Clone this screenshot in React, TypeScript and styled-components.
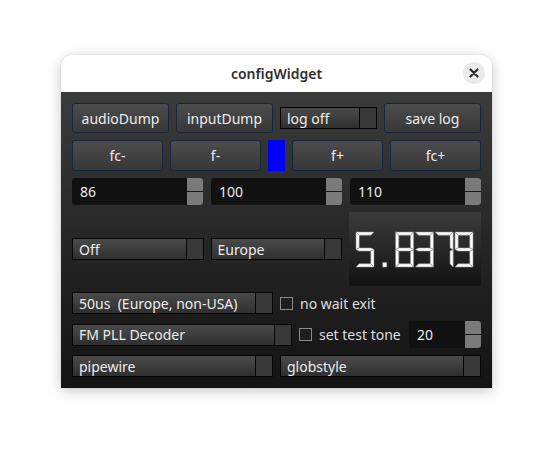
import React from 'react';
import styled, { createGlobalStyle } from 'styled-components';

const GlobalStyle = createGlobalStyle`
  html, body {
    margin: 0;
    padding: 0;
    background: #ffffff;
    font-family: "Noto Sans", "DejaVu Sans", sans-serif;
  }
`;

const Page = styled.div`
  width: 553px;
  height: 455px;
  box-sizing: border-box;
  padding: 55px 0 0 61px;
`;

const Window = styled.div`
  width: 431px;
  display: flex;
  flex-direction: column;
  border-radius: 12px 12px 0 0;
  box-shadow: 0 3px 14px rgba(0, 0, 0, 0.22), 0 0 0 1px rgba(0, 0, 0, 0.04);
  overflow: hidden;
`;

const TitleBar = styled.div`
  height: 37px;
  background: #ffffff;
  display: flex;
  align-items: center;
  justify-content: center;
  position: relative;
`;

const Title = styled.span`
  font-size: 14px;
  font-weight: 600;
  color: #2e2e2e;
`;

const CloseButton = styled.div`
  position: absolute;
  right: 7px;
  top: 7px;
  width: 22px;
  height: 22px;
  border-radius: 50%;
  background: #ebebeb;
  display: flex;
  align-items: center;
  justify-content: center;
`;

const Body = styled.div`
  height: 296px;
  box-sizing: border-box;
  padding: 11px 11px;
  background: linear-gradient(to bottom, #3c3c3c 0%, #262626 50%, #131313 100%);
  display: flex;
  flex-direction: column;
  gap: 7px;
`;

const Row = styled.div<{ $cols: string; $h: number; $gap?: number }>`
  display: grid;
  grid-template-columns: ${({ $cols }) => $cols};
  column-gap: ${({ $gap }) => $gap ?? 7}px;
  height: ${({ $h }) => $h}px;
  align-items: center;
`;

const Button = styled.div`
  height: 100%;
  box-sizing: border-box;
  border: 1px solid #17263c;
  border-radius: 3px;
  background: linear-gradient(to bottom, #4c4c4c, #373737);
  color: #ececec;
  font-size: 14px;
  display: flex;
  align-items: center;
  justify-content: center;
`;

const Indicator = styled.div<{ $color: string }>`
  height: 100%;
  background: ${({ $color }) => $color};
`;

const ComboBox = styled.div`
  height: 22px;
  box-sizing: border-box;
  border: 1px solid #050505;
  background: linear-gradient(to bottom, #4a4a4a, #2f2f2f);
  display: flex;
  color: #ececec;
  font-size: 14px;
`;

const ComboText = styled.div`
  flex: 1;
  display: flex;
  align-items: center;
  padding-left: 6px;
  white-space: pre;
`;

const ComboDrop = styled.div`
  width: 16px;
  border-left: 1px solid #050505;
  background: #383838;
`;

const SpinBox = styled.div`
  height: 100%;
  border-radius: 3px;
  background: #111111;
  display: flex;
  overflow: hidden;
  color: #ececec;
  font-size: 14px;
`;

const SpinText = styled.div`
  flex: 1;
  display: flex;
  align-items: center;
  padding-left: 8px;
`;

const SpinButtons = styled.div`
  width: 16px;
  display: flex;
  flex-direction: column;
  gap: 1px;
  background: #1a1a1a;
`;

const SpinArrow = styled.div`
  flex: 1;
  background: #7a7a7a;
`;

const Lcd = styled.div`
  height: 100%;
  border-radius: 2px;
  background: linear-gradient(to bottom, #3b3b3b, #121212);
  display: flex;
`;

const CheckRow = styled.label`
  display: flex;
  align-items: center;
  gap: 7px;
  color: #dedede;
  font-size: 14px;
  white-space: nowrap;
`;

const CheckBox = styled.span`
  width: 13px;
  height: 13px;
  box-sizing: border-box;
  border: 1px solid #8a8a8a;
  background: #1e1e1e;
`;

const Combo = ({ text }: { text: string }) => (
  <ComboBox>
    <ComboText>{text}</ComboText>
    <ComboDrop />
  </ComboBox>
);

const Spin = ({ value }: { value: string }) => (
  <SpinBox>
    <SpinText>{value}</SpinText>
    <SpinButtons>
      <SpinArrow />
      <SpinArrow />
    </SpinButtons>
  </SpinBox>
);

const Check = ({ label }: { label: string }) => (
  <CheckRow>
    <CheckBox />
    {label}
  </CheckRow>
);

// seven segment geometry, one digit cell
const D = 18;
const H = 35;
const T = 3.2;
const M = H / 2;

const SEGMENTS: Record<string, number[][]> = {
  a: [[0, 0], [D, 0], [D - T, T], [T, T]],
  b: [[D, 0], [D, M], [D - T, M - T / 2], [D - T, T]],
  c: [[D, M], [D, H], [D - T, H - T], [D - T, M + T / 2]],
  d: [[0, H], [D, H], [D - T, H - T], [T, H - T]],
  e: [[0, M], [0, H], [T, H - T], [T, M + T / 2]],
  f: [[0, 0], [0, M], [T, M - T / 2], [T, T]],
  g: [[0, M], [T, M - T / 2], [D - T, M - T / 2], [D, M], [D - T, M + T / 2], [T, M + T / 2]],
};

const DIGITS: Record<string, string> = {
  '0': 'abcdef',
  '1': 'bc',
  '2': 'abged',
  '3': 'abgcd',
  '4': 'fgbc',
  '5': 'afgcd',
  '6': 'afgedc',
  '7': 'abc',
  '8': 'abcdefg',
  '9': 'abcdfg',
};

const LcdNumber = ({ value }: { value: string }) => {
  const pitch = 19.8;
  return (
    <Lcd aria-label={value}>
      <svg width="132" height="74" viewBox="0 0 132 74">
        {value.split('').map((ch, i) => {
          const x = 7 + i * pitch;
          if (ch === '.') {
            return <rect key={i} x={x + 7} y={50.5} width={4} height={4.5} fill="#ffffff" stroke="#8f8f8f" strokeWidth={0.6} />;
          }
          return (
            <g key={i} transform={`translate(${x} 20)`}>
              {DIGITS[ch].split('').map((s) => (
                <polygon
                  key={s}
                  points={SEGMENTS[s].map((p) => p.join(',')).join(' ')}
                  fill="#ffffff"
                  stroke="#8f8f8f"
                  strokeWidth={0.6}
                />
              ))}
            </g>
          );
        })}
      </svg>
    </Lcd>
  );
};

const App = () => (
  <Page>
    <GlobalStyle />
    <Window>
      <TitleBar>
        <Title>configWidget</Title>
        <CloseButton>
          <svg width="10" height="10" viewBox="0 0 10 10">
            <path d="M1.5 1.5 L8.5 8.5 M8.5 1.5 L1.5 8.5" stroke="#2e2e2e" strokeWidth="2.2" strokeLinecap="round" />
          </svg>
        </CloseButton>
      </TitleBar>
      <Body>
        <Row $cols="1fr 1fr 1fr 1fr" $h={30}>
          <Button>audioDump</Button>
          <Button>inputDump</Button>
          <Combo text="log off" />
          <Button>save log</Button>
        </Row>
        <Row $cols="1fr 1fr 17px 1fr 1fr" $h={31}>
          <Button>fc-</Button>
          <Button>f-</Button>
          <Indicator $color="#0000ff" />
          <Button>f+</Button>
          <Button>fc+</Button>
        </Row>
        <Row $cols="1fr 1fr 1fr" $h={27} $gap={8}>
          <Spin value="86" />
          <Spin value="100" />
          <Spin value="110" />
        </Row>
        <Row $cols="1fr 1fr 1fr" $h={73}>
          <Combo text="Off" />
          <Combo text="Europe" />
          <LcdNumber value="5.8379" />
        </Row>
        <Row $cols="201px 1fr" $h={22}>
          <Combo text="50us  (Europe, non-USA)" />
          <Check label="no wait exit" />
        </Row>
        <Row $cols="220px 1fr 72px" $h={27}>
          <Combo text="FM PLL Decoder" />
          <Check label="set test tone" />
          <Spin value="20" />
        </Row>
        <Row $cols="1fr 1fr" $h={22}>
          <Combo text="pipewire" />
          <Combo text="globstyle" />
        </Row>
      </Body>
    </Window>
  </Page>
);

export default App;
